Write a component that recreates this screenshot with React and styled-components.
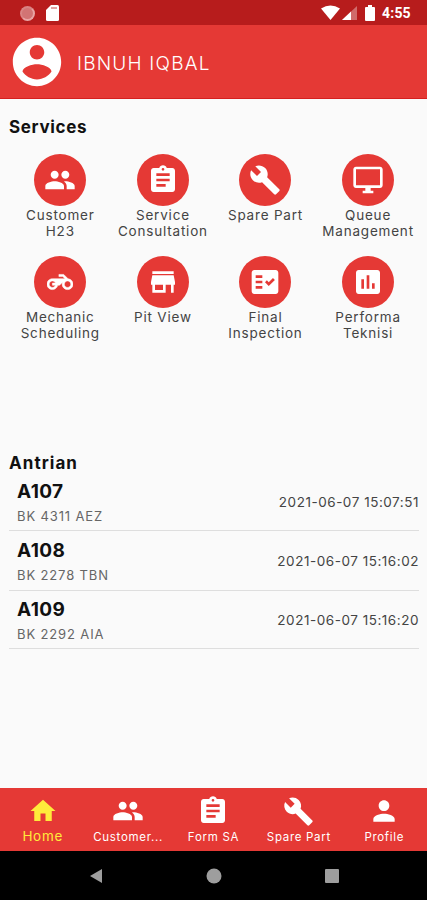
import styled, { createGlobalStyle } from "styled-components";
import {
  MdAssessment,
  MdAssignment,
  MdBuild,
  MdFactCheck,
  MdHome,
  MdPeople,
  MdPerson,
} from "react-icons/md";

const GlobalStyle = createGlobalStyle`
  * {
    box-sizing: border-box;
  }

  body {
    margin: 0;
    font-family: "Inter", "Liberation Sans", sans-serif;
  }
`;

const Screen = styled.div`
  display: flex;
  flex-direction: column;
  width: 427px;
  height: 900px;
  overflow: hidden;
  background: #fafafa;
  color: #111;
`;

const StatusBar = styled.div`
  display: flex;
  align-items: center;
  justify-content: space-between;
  height: 25px;
  flex: none;
  padding: 1px 15px 0 20px;
  background: #b71c1c;
  color: #fff;
`;

const StatusGroup = styled.div`
  display: flex;
  align-items: center;
`;

const SyncDot = styled.span`
  width: 15px;
  height: 15px;
  margin-right: 11px;
  border: 2px solid #e9a5a5;
  border-left-color: #d98484;
  border-top-color: #d98484;
  border-radius: 50%;
  background: #d27474;
`;

const Clock = styled.span`
  width: 30px;
  margin-left: 7px;
  font-family: Roboto, sans-serif;
  font-size: 14px;
  font-weight: 700;
  letter-spacing: 0.2px;
  white-space: nowrap;
`;

const Header = styled.header`
  display: flex;
  align-items: center;
  height: 74px;
  flex: none;
  padding: 0 8px;
  gap: 11px;
  background: #e53935;
  border-bottom: 1px solid #d5201f;
  color: #fff;
`;

const UserName = styled.h1`
  margin: 4px 0 0;
  font-size: 19px;
  font-weight: 300;
  letter-spacing: 1.2px;
`;

const Content = styled.main`
  flex: 1;
  padding: 18px 8px 0 9px;
`;

const SectionTitle = styled.h2`
  margin: 0;
  font-size: 17px;
  line-height: 20px;
  font-weight: 700;
  letter-spacing: ${({ $spacing }) => $spacing || 0.65}px;
`;

const ServiceGrid = styled.div`
  display: grid;
  grid-template-columns: repeat(4, 102.6px);
  grid-auto-rows: 102px;
  height: 298px;
  padding-top: 17px;
`;

const Service = styled.div`
  display: flex;
  flex-direction: column;
  align-items: center;
`;

const ServiceIcon = styled.div`
  display: flex;
  align-items: center;
  justify-content: center;
  width: 52px;
  height: 52px;
  flex: none;
  border-radius: 50%;
  background: #e53935;
  color: #fff;
`;

const ServiceLabel = styled.span`
  margin-top: 1px;
  color: #444;
  font-size: 13.5px;
  line-height: 16px;
  letter-spacing: 0.8px;
  text-align: center;
  white-space: pre-line;
`;

const Queue = styled.section`
  padding-top: 18px;
`;

const QueueRow = styled.div`
  display: flex;
  align-items: center;
  justify-content: space-between;
  height: ${({ $height }) => $height}px;
  padding: 0 0 0 8px;
  border-bottom: 1px solid #dedede;
`;

const TicketInfo = styled.div`
  padding-top: 4px;
`;

const Ticket = styled.div`
  font-size: 19px;
  line-height: 24px;
  font-weight: 700;
  letter-spacing: 0.4px;
`;

const Plate = styled.div`
  color: #666;
  font-size: 13px;
  line-height: 24px;
  letter-spacing: 0.87px;
`;

const Time = styled.time`
  color: #444;
  font-size: 13.5px;
  letter-spacing: 0.53px;
`;

const BottomNav = styled.nav`
  display: grid;
  grid-template-columns: repeat(5, 1fr);
  height: 63px;
  flex: none;
  background: #e53935;
`;

const NavItem = styled.div`
  display: flex;
  flex-direction: column;
  align-items: center;
  padding-top: 7px;
  color: ${({ $active }) => ($active ? "#ffeb3b" : "#fff")};
`;

const NavIcon = styled.div`
  display: flex;
  align-items: center;
  justify-content: center;
  height: 32px;
`;

const NavLabel = styled.span`
  font-size: ${({ $active }) => ($active ? 13.5 : 11.5)}px;
  line-height: ${({ $active }) => ($active ? 18 : 20)}px;
  letter-spacing: 0.7px;
  white-space: nowrap;
`;

const SystemBar = styled.div`
  display: flex;
  align-items: center;
  justify-content: space-between;
  height: 49px;
  flex: none;
  padding: 0 88px 0 89px;
  background: #000;
`;

function FilledIcon({ d, size, stroke = 0 }) {
  return (
    <svg
      width={size}
      height={size}
      viewBox="0 0 24 24"
      fill="currentColor"
      stroke="currentColor"
      strokeWidth={stroke}
    >
      <path d={d} />
    </svg>
  );
}

function AccountIcon() {
  return (
    <FilledIcon
      size={58}
      d="M12 2C6.480 2 2 6.480 2 12s4.480 10 10 10 10-4.480 10-10S17.520 2 12 2zm0 3c1.660 0 3 1.340 3 3s-1.340 3-3 3-3-1.340-3-3 1.340-3 3-3zm0 14.200c-2.500 0-4.710-1.280-6-3.220.030-1.990 4-3.080 6-3.080 1.990 0 5.970 1.090 6 3.080-1.290 1.940-3.500 3.220-6 3.220z"
    />
  );
}

function MonitorIcon({ size }) {
  return (
    <FilledIcon
      size={size}
      d="M21 2H3c-1.100 0-2 .9-2 2v12c0 1.100.9 2 2 2h7v2H8v2h8v-2h-2v-2h7c1.100 0 2-.9 2-2V4c0-1.100-.9-2-2-2zm0 14H3V4h18v12z"
    />
  );
}

function StoreIcon({ size }) {
  return (
    <FilledIcon
      size={size}
      d="M20 4H4v2h16V4zm1 10v-2l-1-5H4l-1 5v2h1v6h10v-6h4v6h2v-6h1zm-9 4H6v-4h6v4z"
    />
  );
}

function MotorcycleIcon() {
  return (
    <FilledIcon
      size={26}
      stroke={0.5}
      d="M19.440 9.030L15.410 5H11v2h3.590l2 2H5c-2.800 0-5 2.200-5 5s2.200 5 5 5c2.460 0 4.450-1.690 4.900-4h1.650l2.770-2.770c-.21.54-.32 1.140-.32 1.770 0 2.800 2.200 5 5 5s5-2.200 5-5c0-2.650-1.970-4.770-4.560-4.970zM7.820 15C7.400 16.150 6.280 17 5 17c-1.630 0-3-1.370-3-3s1.370-3 3-3c1.280 0 2.400.85 2.820 2H5v2h2.820zM19 17c-1.660 0-3-1.340-3-3s1.340-3 3-3 3 1.340 3 3-1.340 3-3 3z"
    />
  );
}

const services = [
  { label: "Customer\nH23", icon: MdPeople },
  { label: "Service\nConsultation", icon: MdAssignment },
  { label: "Spare Part", icon: MdBuild },
  { label: "Queue\nManagement", icon: MonitorIcon },
  { label: "Mechanic\nScheduling", icon: MotorcycleIcon },
  { label: "Pit View", icon: StoreIcon },
  { label: "Final\nInspection", icon: MdFactCheck },
  { label: "Performa\nTeknisi", icon: MdAssessment },
];

const queue = [
  { ticket: "A107", plate: "BK 4311 AEZ", time: "2021-06-07 15:07:51", height: 58 },
  { ticket: "A108", plate: "BK 2278 TBN", time: "2021-06-07 15:16:02", height: 60 },
  { ticket: "A109", plate: "BK 2292 AIA", time: "2021-06-07 15:16:20", height: 58 },
];

const tabs = [
  { label: "Home", icon: MdHome, size: 30, active: true },
  { label: "Customer...", icon: MdPeople, size: 32 },
  { label: "Form SA", icon: MdAssignment, size: 32 },
  { label: "Spare Part", icon: MdBuild, size: 31 },
  { label: "Profile", icon: MdPerson, size: 32 },
];

export default function App() {
  return (
    <>
      <GlobalStyle />
      <Screen>
        <StatusBar>
          <StatusGroup>
            <SyncDot />
            <svg width="13" height="16" viewBox="0 0 13 16">
              <path d="M5 0h6.5A1.5 1.5 0 0 1 13 1.500v13a1.500 1.500 0 0 1-1.500 1.500h-10A1.500 1.500 0 0 1 0 14.500V5z" fill="#fff" />
              <path d="M5 3h6" stroke="#d98484" strokeWidth="1.500" />
            </svg>
          </StatusGroup>
          <StatusGroup>
            <svg width="54" height="16" viewBox="0 0 54 16">
              <path d="M0 3.500Q9.500-2.500 19 3.500L9.500 15z" fill="#fff" />
              <path d="M36 1v14H21z" fill="#fff" opacity=".35" />
              <path d="M30 6.600V15h-9z" fill="#fff" />
              <path d="M47 0h4v2h2q1 0 1 1v12q0 1-1 1h-8q-1 0-1-1V3q0-1 1-1h2z" fill="#fff" />
            </svg>
            <Clock>4:55</Clock>
          </StatusGroup>
        </StatusBar>

        <Header>
          <AccountIcon />
          <UserName>IBNUH IQBAL</UserName>
        </Header>

        <Content>
          <SectionTitle>Services</SectionTitle>
          <ServiceGrid>
            {services.map(({ label, icon: Icon }) => (
              <Service key={label}>
                <ServiceIcon>
                  <Icon size={32} />
                </ServiceIcon>
                <ServiceLabel>{label}</ServiceLabel>
              </Service>
            ))}
          </ServiceGrid>

          <Queue>
            <SectionTitle $spacing={1.05}>Antrian</SectionTitle>
            {queue.map(({ ticket, plate, time, height }) => (
              <QueueRow key={ticket} $height={height}>
                <TicketInfo>
                  <Ticket>{ticket}</Ticket>
                  <Plate>{plate}</Plate>
                </TicketInfo>
                <Time>{time}</Time>
              </QueueRow>
            ))}
          </Queue>
        </Content>

        <BottomNav>
          {tabs.map(({ label, icon: Icon, size, active }) => (
            <NavItem key={label} $active={active}>
              <NavIcon>
                <Icon size={size} />
              </NavIcon>
              <NavLabel $active={active}>{label}</NavLabel>
            </NavItem>
          ))}
        </BottomNav>

        <SystemBar>
          <svg width="14" height="16" viewBox="0 0 14 16">
            <path d="M13 1v14L1 8z" fill="#9e9e9e" />
          </svg>
          <svg width="16" height="16" viewBox="0 0 16 16">
            <circle cx="8" cy="8" r="7.500" fill="#9e9e9e" />
          </svg>
          <svg width="14" height="14" viewBox="0 0 14 14">
            <rect width="14" height="14" rx="1" fill="#9e9e9e" />
          </svg>
        </SystemBar>
      </Screen>
    </>
  );
}
